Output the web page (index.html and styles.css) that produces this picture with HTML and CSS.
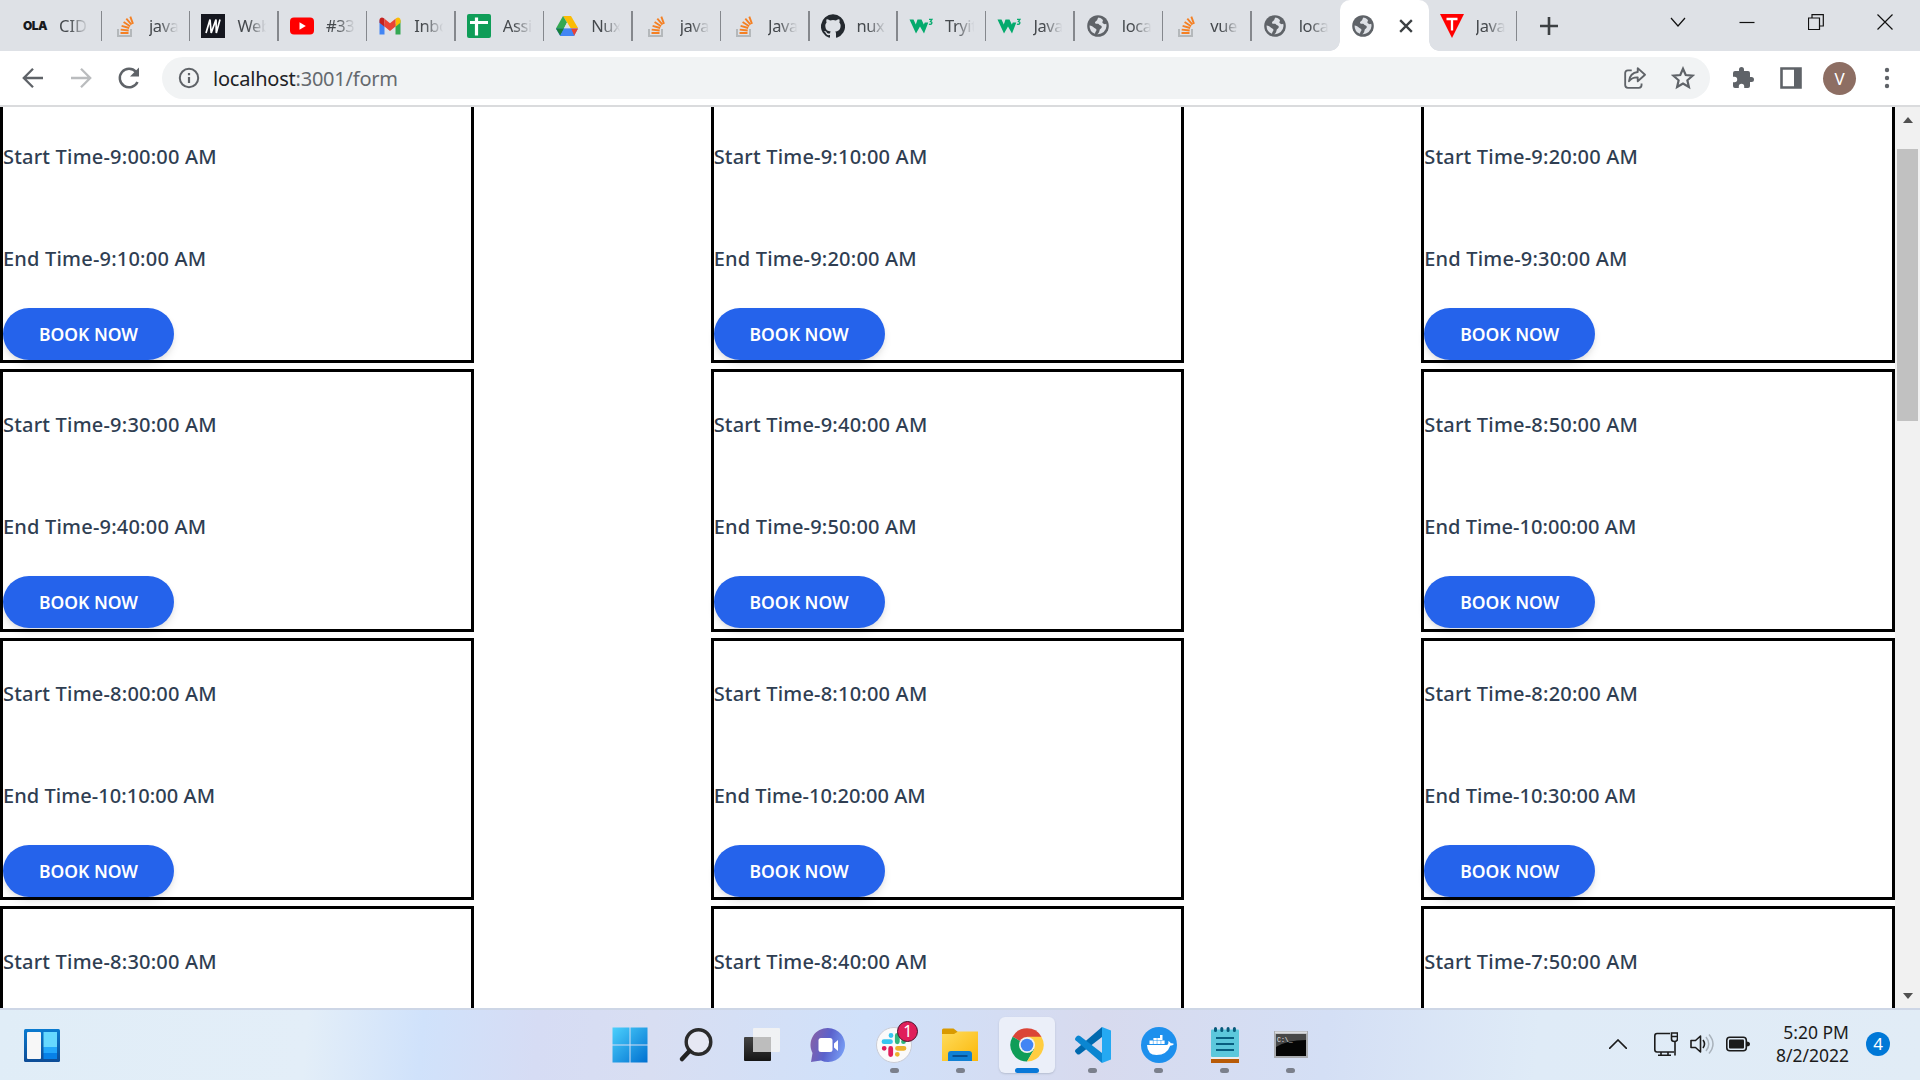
FILE: index.html
```html
<!DOCTYPE html>
<html lang="en">
<head>
<meta charset="utf-8">
<title>localhost:3001/form</title>
<link rel="stylesheet" href="styles.css">
</head>
<body>
<svg class="defs" width="0" height="0">
  <symbol id="so" viewBox="0 0 24 24">
    <path d="M5 15v7h13v-7" fill="none" stroke="#b4b8bb" stroke-width="2"/>
    <path d="M7.5 19h8M7.7 15.6l8 .9M8.6 11.8l7.6 2.2M10.6 8l6.5 4.2M13.3 4.600l5.200 6M17.300 2.600l2.700 7.200" stroke="#f48024" stroke-width="1.900" fill="none"/>
  </symbol>
  <symbol id="globe" viewBox="0 0 24 24">
    <circle cx="12" cy="12" r="10.800" fill="#5f6368"/>
    <path d="M12.500 3.600c-1.600 1.300-.6 2.600-2.300 3.500-1.500.8-1.700 2.300-.2 2.600 1.900.3 2.200-.5 3.300 1 .8 1 2.500.6 2.500 2.200 0 1.400-1.500 1.500-2 2.700-.5 1.300-.5 3.600-2.500 4.600A8.500 8.500 0 0 0 20.500 12c0-.8-.1-1.500-.3-2.200-1.200.6-2.800.4-3.600-.8-.7-1.100.6-1.700.3-3a8.500 8.500 0 0 0-4.400-2.400zM3.600 11.500c2 .3 3.300 1.200 4.500 2.200 1.100.9 2.400.9 2.400 2.400 0 1.200-1.500 1.700-1.500 3.700A8.500 8.500 0 0 1 3.600 11.500z" fill="#dee1e6"/>
  </symbol>
  <symbol id="w3" viewBox="0 0 24 24">
    <path d="M1 6h4l2.300 5L9 6h4l2.300 5 1-2h3.500L15.500 20 11.500 13 7.500 20z" fill="#04aa6d" transform="translate(-.5 -.5)"/>
    <path d="M20 5.300h3l-1.500 2.200c2.200.2 1.800 3.400-1.600 2.700" fill="none" stroke="#04aa6d" stroke-width="1.300"/>
  </symbol>
</svg>

<header class="tabs">
  <div class="tab first"><span class="ola">OLA</span><span class="label">CID</span></div>
  <div class="tab"><svg class="fav"><use href="#so"/></svg><span class="label">java</span></div>
  <div class="tab"><svg class="fav" viewBox="0 0 24 24"><path fill="#15171f" d="M0 0h24v24H0z"/><path d="M5 19L9 5.500l1.200 13.500L15 5.500l.3 13.500L19 5.500" fill="none" stroke="#fff" stroke-width="1.700"/></svg><span class="label">Web</span></div>
  <div class="tab"><svg class="fav" viewBox="0 0 24 24"><rect y="3.500" width="24" height="17" rx="4" fill="#f00"/><path d="M9.500 8.300v7.400l6.300-3.700z" fill="#fff"/></svg><span class="label">#33</span></div>
  <div class="tab"><svg class="fav" viewBox="0 0 24 24"><path d="M1.500 6v14.500h5V10z" fill="#4285f4"/><path d="M22.500 6v14.500h-5V10z" fill="#34a853"/><path d="M1.500 6c0-2 2.300-3.300 4-2l1 .8v8l-5-4z" fill="#c5221f"/><path d="M22.500 6c0-2-2.300-3.300-4-2l-1 .8v8l5-4z" fill="#fbbc04"/><path d="M6.500 4.800l5.500 4.400 5.500-4.400v7.700L12 17l-5.500-4.500z" fill="#ea4335"/></svg><span class="label">Inbo</span></div>
  <div class="tab"><svg class="fav" viewBox="0 0 24 24"><rect width="24" height="24" rx="2" fill="#0f9d58"/><path d="M3 8.500h18M9.500 3.500v18" stroke="#fff" stroke-width="3.200"/></svg><span class="label">Assi</span></div>
  <div class="tab"><svg class="fav" viewBox="0 0 24 24"><path d="M8 2h8l7 12h-7.500z" fill="#fbbc04"/><path d="M8 2l4 6.500L5.200 21.500 1 14.500z" fill="#34a853"/><path d="M5.500 14.500H23l-4 7.500H5.200L1 14.500z" fill="#4285f4"/><path d="M16 14.500h7L19 22z" fill="#ea4335"/><path d="M1 14.500h8L5.200 21.500z" fill="#188038"/><path d="M9 14.500h6.200L12 8.500z" fill="#dee1e6"/><path d="M5.200 21.800l4-7.300h6.500l3.600 7.300z" fill="#4285f4"/></svg><span class="label">Nux</span></div>
  <div class="tab"><svg class="fav"><use href="#so"/></svg><span class="label">java</span></div>
  <div class="tab"><svg class="fav"><use href="#so"/></svg><span class="label">Java</span></div>
  <div class="tab"><svg class="fav" viewBox="0 0 24 24"><path fill="#24292f" d="M12 .3a12 12 0 0 0-3.800 23.400c.6.1.8-.3.8-.6v-2c-3.300.7-4-1.600-4-1.600-.6-1.400-1.400-1.800-1.400-1.800-1-.7.100-.7.100-.7 1.200 0 1.900 1.200 1.900 1.200 1 1.800 2.800 1.300 3.500 1 0-.8.400-1.300.7-1.600-2.700-.3-5.500-1.300-5.500-6 0-1.200.5-2.300 1.300-3.100-.2-.400-.6-1.600 0-3.200 0 0 1-.3 3.400 1.200a11.500 11.500 0 0 1 6 0c2.300-1.500 3.300-1.200 3.300-1.200.6 1.600.2 2.800 0 3.200.9.800 1.300 1.900 1.300 3.200 0 4.600-2.800 5.600-5.500 5.900.5.400.9 1 .9 2.200v3.300c0 .3.100.7.800.6A12 12 0 0 0 12 .3"/></svg><span class="label">nux</span></div>
  <div class="tab"><svg class="fav"><use href="#w3"/></svg><span class="label">Tryit</span></div>
  <div class="tab"><svg class="fav"><use href="#w3"/></svg><span class="label">Java</span></div>
  <div class="tab"><svg class="fav"><use href="#globe"/></svg><span class="label">loca</span></div>
  <div class="tab"><svg class="fav"><use href="#so"/></svg><span class="label">vue</span></div>
  <div class="tab nosep"><svg class="fav"><use href="#globe"/></svg><span class="label">loca</span></div>
  <div class="tab active"><svg class="fav"><use href="#globe"/></svg><svg class="close" viewBox="0 0 12 12"><path d="M1 1l10 10M11 1L1 11" stroke="#3c4043" stroke-width="2"/></svg></div>
  <div class="tab"><svg class="fav" viewBox="0 0 24 24"><path d="M0 0h24L12 24z" fill="#f00"/><path d="M6.500 5h11M12 5v11.500" stroke="#fff" stroke-width="2.300"/></svg><span class="label">Java</span></div>
  <svg class="plus" viewBox="0 0 18 18"><path d="M9 0v18M0 9h18" stroke="#3c4043" stroke-width="2.600"/></svg>
  <div class="window">
    <svg viewBox="0 0 16 16"><path d="M1 4l7 8 7-8" /></svg>
    <svg viewBox="0 0 16 16"><path d="M.5 8.500h15" /></svg>
    <svg viewBox="0 0 16 16"><path d="M.5 4h11v11.500H.5zM4 4V.7h11.300V12H11.500" /></svg>
    <svg viewBox="0 0 16 16"><path d="M.5.5l15 15M15.500.5l-15 15" /></svg>
  </div>
</header>

<nav class="toolbar">
  <svg class="nav" viewBox="0 0 24 24"><path d="M22 12H3M12 2.800L2.800 12l9.200 9.200" fill="none" stroke="#5f6368" stroke-width="2.300"/></svg>
  <svg class="nav" viewBox="0 0 24 24"><path d="M2 12h19M12 2.800l9.200 9.200-9.200 9.200" fill="none" stroke="#babcbe" stroke-width="2.300"/></svg>
  <svg class="nav" viewBox="0 0 24 24"><path d="M20.500 16A9.300 9.300 0 1 1 19 5.800" fill="none" stroke="#5f6368" stroke-width="2.500"/><path d="M22 1.500v9h-9z" fill="#5f6368"/></svg>
  <div class="omnibox">
    <svg class="info" viewBox="0 0 22 22"><circle cx="11" cy="11" r="9.200" fill="none" stroke="#5f6368" stroke-width="2"/><path d="M11 10v6M11 6v2.200" stroke="#5f6368" stroke-width="2.200"/></svg>
    <span class="url"><b>localhost</b>:3001/form</span>
    <svg class="share" viewBox="0 0 22 22"><path d="M8 4H4.500Q2 4 2 6.500v11Q2 20 4.500 20h10q2.500 0 2.500-2.500V16M13.500 2l6.700 6-6.700 6v-3.500c-4-.2-6 1-8 3.500.5-4.500 3-8 8-8.500z" fill="none" stroke="#5f6368" stroke-width="1.700" stroke-linejoin="round"/></svg>
    <svg class="star" viewBox="0 0 22 22"><path d="M11 2.500l2.500 5.800 6.300.6-4.800 4.200 1.400 6.200L11 16l-5.400 3.300L7 13.100 2.200 8.900l6.300-.6z" fill="none" stroke="#5f6368" stroke-width="2"/></svg>
  </div>
  <svg class="ext" viewBox="0 0 24 24"><path d="M20.500 11H19V7a2 2 0 0 0-2-2h-4V3.500a2.500 2.500 0 0 0-5 0V5H4a2 2 0 0 0-2 2v3.800h1.500a2.700 2.700 0 0 1 0 5.400H2V20a2 2 0 0 0 2 2h3.800v-1.500a2.700 2.700 0 0 1 5.400 0V22H17a2 2 0 0 0 2-2v-4h1.500a2.500 2.500 0 0 0 0-5z" fill="#5f6368"/></svg>
  <svg class="side" viewBox="0 0 22 22"><path d="M1.500 1.500h19v19h-19z" fill="none" stroke="#5f6368" stroke-width="2.600"/><path d="M14 1h7v20h-7z" fill="#5f6368"/></svg>
  <span class="avatar">V</span>
  <svg class="dots" viewBox="0 0 6 22"><g fill="#5f6368"><circle cx="3" cy="3" r="2.200"/><circle cx="3" cy="11" r="2.200"/><circle cx="3" cy="19" r="2.200"/></g></svg>
</nav>

<div class="viewport">
  <main class="slots">
    <article class="card"><p>Start Time-9:00:00 AM</p><p>End Time-9:10:00 AM</p><button>BOOK NOW</button></article>
    <article class="card"><p>Start Time-9:10:00 AM</p><p>End Time-9:20:00 AM</p><button>BOOK NOW</button></article>
    <article class="card"><p>Start Time-9:20:00 AM</p><p>End Time-9:30:00 AM</p><button>BOOK NOW</button></article>
    <article class="card"><p>Start Time-9:30:00 AM</p><p>End Time-9:40:00 AM</p><button>BOOK NOW</button></article>
    <article class="card"><p>Start Time-9:40:00 AM</p><p>End Time-9:50:00 AM</p><button>BOOK NOW</button></article>
    <article class="card"><p>Start Time-8:50:00 AM</p><p class="late">End Time-10:00:00 AM</p><button>BOOK NOW</button></article>
    <article class="card"><p>Start Time-8:00:00 AM</p><p class="late">End Time-10:10:00 AM</p><button>BOOK NOW</button></article>
    <article class="card"><p>Start Time-8:10:00 AM</p><p class="late">End Time-10:20:00 AM</p><button>BOOK NOW</button></article>
    <article class="card"><p>Start Time-8:20:00 AM</p><p class="late">End Time-10:30:00 AM</p><button>BOOK NOW</button></article>
    <article class="card"><p>Start Time-8:30:00 AM</p></article>
    <article class="card"><p>Start Time-8:40:00 AM</p></article>
    <article class="card"><p>Start Time-7:50:00 AM</p></article>
  </main>
  <div class="scrollbar"><i class="up"></i><i class="thumb"></i><i class="down"></i></div>
</div>

<footer class="taskbar">
  <svg class="widgets" viewBox="0 0 36 40"><defs><linearGradient id="wb" x2="0" y2="1"><stop stop-color="#0a7bd0"/><stop offset="1" stop-color="#0d4c96"/></linearGradient></defs><rect y="4" width="36" height="33" rx="1.500" fill="url(#wb)"/><rect x="3" y="7" width="14" height="27" rx="1" fill="#f7f7f7"/><path d="M19.500 7H33v15H19.500z" fill="#66d8ff"/><path d="M19.500 22H33v6H19.500z" fill="#22a7fb"/><path d="M19.500 28H33v6H19.500z" fill="#0781e8"/></svg>
  <div class="apps">
    <div class="app"><svg viewBox="0 0 36 36"><defs><linearGradient id="wn" x2="1" y2="1"><stop stop-color="#4cd0fc"/><stop offset="1" stop-color="#0070d0"/></linearGradient></defs><path d="M.5.500h17v17H.500zM18.500.5h17v17h-17zM.5 18.500h17v17H.5zM18.500 18.500h17v17h-17z" fill="url(#wn)"/></svg></div>
    <div class="app"><svg viewBox="0 0 36 36"><circle cx="20.500" cy="15" r="12.300" fill="#e6e8f3" stroke="#2b2b2b" stroke-width="3.400"/><path d="M11.500 24L4 32" stroke="#222" stroke-width="4.500" stroke-linecap="round"/></svg></div>
    <div class="app"><svg viewBox="0 0 36 36"><defs><linearGradient id="tv" x2="0" y2="1"><stop stop-color="#444"/><stop offset="1" stop-color="#151515"/></linearGradient></defs><rect x="0" y="10" width="27" height="24" rx="1" fill="url(#tv)"/><rect x="9" y="1" width="27" height="24" rx="1" fill="#f4f4f4" opacity=".88"/><path d="M9 10h18v15H9z" fill="#bdbdbd"/></svg></div>
    <div class="app"><svg viewBox="0 0 36 36"><defs><linearGradient id="ch" x1="0" y1=".3" x2="1" y2=".6"><stop stop-color="#8560a8"/><stop offset=".5" stop-color="#5a62cc"/><stop offset="1" stop-color="#779cf4"/></linearGradient></defs><path d="M18 1a17 17 0 1 1-7 32.500L1 35l1.500-9A17 17 0 0 1 18 1z" fill="url(#ch)"/><rect x="8.500" y="11" width="14" height="14" rx="2.500" fill="#fff"/><path d="M24 16.500l4-3.500v11l-4-3.500z" fill="#fff"/></svg></div>
    <div class="app run"><svg viewBox="0 0 36 36"><circle cx="18" cy="18" r="17.500" fill="#fafafa" stroke="#c9ccd6"/><g stroke-width="4.800" stroke-linecap="round"><path d="M8 14.700h6.500M15 8.500v0" stroke="#36c5f0"/><path d="M21.300 8.500v6.300M27.500 14.700v0" stroke="#2eb67d"/><path d="M21.500 21.300H28M21.300 27.300v0" stroke="#ecb22e"/><path d="M14.700 21.500v6M8.200 21.300v0" stroke="#e01e5a"/></g></svg><em>1</em></div>
    <div class="app run"><svg viewBox="0 0 36 36"><defs><linearGradient id="fo" x2="1" y2="1"><stop stop-color="#ffdc5c"/><stop offset="1" stop-color="#fbb709"/></linearGradient></defs><path d="M0 8V3q0-1.500 1.500-1.500h10L16 5v4z" fill="#d99a00"/><path d="M0 7h12l4-2.500h20V34H0z" fill="url(#fo)"/><path d="M6 34V27q0-3 3-3h18q3 0 3 3v7z" fill="#1080d4"/><path d="M10.500 29h15" stroke="#064f92" stroke-width="2"/></svg></div>
    <div class="app run current"><svg viewBox="0 0 36 36"><path d="M18 18L3.600 9.700A16.600 16.600 0 0 1 32.400 9.700z" fill="#db4437"/><path d="M18 18L3.600 9.700A16.600 16.600 0 0 0 18 34.600l7.200-12.400z" fill="#0f9d58"/><path d="M18 9.700h14.400A16.600 16.600 0 0 1 18 34.600l7.200-12.400z" fill="#ffcd40"/><circle cx="18" cy="18" r="8" fill="#f1f1f1"/><circle cx="18" cy="18" r="6.300" fill="#4285f4"/></svg></div>
    <div class="app run"><svg viewBox="0 0 36 36"><path d="M27 0v10L5 27q-1.500 1-3 0l-1.500-1.700q-1-1.300 0-2.600z" fill="#0069ae"/><path d="M27 36V26L5 9Q3.500 8 2 9L.500 10.700q-1 1.300 0 2.600z" fill="#0b86d1"/><path d="M27 0l9 3.500v29L27 36z" fill="#25a9f2"/></svg></div>
    <div class="app run"><svg viewBox="0 0 36 36"><circle cx="18" cy="18" r="18" fill="#1d90ed"/><path d="M6 18h20q1.800-.5 1.300-4 2 .7 2.500 2.300 2-.3 3.200.7-1.200 1.800-3.800 1.800Q26 28 15.500 28 6.500 28 6 18z" fill="#fff"/><path d="M8.500 13.500h3.400V17H8.500zM12.400 13.500h3.400V17h-3.400zM16.300 13.500h3.400V17h-3.400zM20.200 13.500h3.400V17h-3.400zM12.400 11h3.400v2h-3.400zM16.300 11h3.400v2h-3.400zM19 8h2.500v5H19z" fill="#fff"/></svg></div>
    <div class="app run"><svg viewBox="0 0 36 36"><path d="M4 32h28v4H4z" fill="#b85b08"/><path d="M4 29h28v3H4z" fill="#eee"/><rect x="4" y="2.500" width="28" height="27.500" rx="1" fill="#5cc8dc"/><path d="M9 11h18M9 17h18M9 23h18" stroke="#075e80" stroke-width="1.800"/><path d="M8.500 1.500v2M14.800 1.500v2M21.100 1.500v2M27.400 1.500v2" stroke="#07597a" stroke-width="3" stroke-linecap="round"/></svg></div>
    <div class="app run"><svg viewBox="0 0 36 36"><path d="M1 4h34v27H1z" fill="#a9abaf"/><path d="M2 4.500h32v2H2z" fill="#dcdde0"/><path d="M3 7h30v22H3z" fill="#050505"/><path d="M3 7h30v6Q14 13 3 20z" fill="#484848"/><text x="4" y="14.500" class="prompt">C:\_</text></svg></div>
  </div>
  <div class="tray">
    <svg class="chev" viewBox="0 0 18 10"><path d="M0 10L9 1l9 9" fill="none" stroke="#1b1b1b" stroke-width="1.600"/></svg>
    <svg class="net" viewBox="0 0 24 24"><path d="M16 1.500H3Q.8 1.500.8 4v13.500Q.8 20 3 20h17M7 20v3.500M14 20v3.500M4 23.200h13M21 10v13.500M17.500 1h6v6q0 2.500-3 2.500t-3-2.500zM17.500 4.500h6" fill="none" stroke="#1b1b1b" stroke-width="1.600"/></svg>
    <svg class="vol" viewBox="0 0 24 22"><path d="M1 7.500h4.500L10.500 3v16l-5-4.500H1z" fill="none" stroke="#1b1b1b" stroke-width="1.600" stroke-linejoin="round"/><path d="M13 7q3 4 0 8" fill="none" stroke="#1b1b1b" stroke-width="1.600"/><path d="M16 4q5.500 7 0 14M19 1.500q8 9.500 0 19" fill="none" stroke="#a9b2bb" stroke-width="1.500"/></svg>
    <svg class="bat" viewBox="0 0 24 16"><rect x=".8" y="1.300" width="19.500" height="13.400" rx="3" fill="none" stroke="#1b1b1b" stroke-width="1.600"/><rect x="3" y="3.500" width="15" height="9" rx="1" fill="#1b1b1b"/><path d="M20.500 5.500q3.500 0 3.500 2.500t-3.500 2.500z" fill="#1b1b1b"/></svg>
    <div class="clock"><span>5:20 PM</span><span>8/2/2022</span></div>
    <span class="count">4</span>
  </div>
</footer>
</body>
</html>
```
FILE: styles.css
```css
* { box-sizing: border-box; }
body { margin: 0; width: 1920px; height: 1080px; overflow: hidden; display: flex; flex-direction: column; background: #fff; font-family: "Noto Sans", "Open Sans", sans-serif; }
svg { display: block; flex: none; }
.defs { position: absolute; }

.tabs { height: 51px; flex: none; display: flex; background: #dee1e6; }
.tab { position: relative; width: 88.450px; height: 51px; flex: none; display: flex; align-items: center; padding-left: 11px; }
.tab::after { content: ""; position: absolute; right: 0; top: 11px; width: 1.500px; height: 30px; background: #85888d; }
.tab.first { width: 102px; padding-left: 23px; }
.tab.nosep::after { display: none; }
.fav { width: 24px; height: 24px; }
.ola { width: 24px; font: 900 12px Inter, sans-serif; letter-spacing: -.6px; color: #17191c; }
.label { width: 30px; margin-left: 12px; overflow: hidden; white-space: nowrap; font-size: 16.500px; letter-spacing: -.4px; color: #45494d; -webkit-mask-image: linear-gradient(90deg, #000 35%, transparent 98%); mask-image: linear-gradient(90deg, #000 35%, transparent 98%); }
.first .label { letter-spacing: 0; }
.tab.active { background: #fff; border-radius: 10px 10px 0 0; }
.tab.active::before, .tab.active::after { content: ""; position: absolute; top: auto; bottom: 0; width: 10px; height: 10px; }
.tab.active::before { left: -10px; background: radial-gradient(circle at 0 0, transparent 9.500px, #fff 10px); }
.tab.active::after { right: -10px; background: radial-gradient(circle at 100% 0, transparent 9.500px, #fff 10px); }
.close { width: 14px; height: 14px; margin-left: 24px; }
.plus { width: 18px; height: 18px; margin: 17px 0 0 23px; }
.window { margin-left: auto; display: flex; gap: 53px; padding: 14px 27px 0 0; }
.window svg { width: 16px; height: 16px; fill: none; stroke: #111; stroke-width: 1.200; }

.toolbar { height: 56px; flex: none; display: flex; align-items: center; border-bottom: 2px solid #dadbdd; padding-left: 21px; }
.nav { width: 24px; height: 24px; margin-right: 24px; }
.omnibox { width: 1548px; height: 42px; margin: 0 0 0 -3px; border-radius: 21px; background: #f1f3f4; display: flex; align-items: center; padding: 0 15px 0 16px; }
.info { width: 22px; height: 22px; }
.url { margin-left: 13px; font-size: 20px; letter-spacing: -.22px; color: #65696e; }
.url b { font-weight: 400; color: #202124; }
.share { width: 24px; height: 24px; margin-left: auto; }
.star { width: 24px; height: 24px; margin-left: 24px; }
.ext { width: 24px; height: 24px; margin-left: 21px; }
.side { width: 22px; height: 22px; margin-left: 25px; }
.avatar { width: 33px; height: 33px; margin-left: 21px; border-radius: 50%; background: #8d6e63; color: #fff; font-size: 17px; display: grid; place-items: center; }
.dots { width: 6px; height: 22px; margin-left: 28px; }

.viewport { height: 901px; flex: none; overflow: hidden; display: flex; }
.slots { width: 1895px; flex: none; display: grid; grid-template-columns: repeat(3, 25%); grid-auto-rows: 262.500px; justify-content: space-between; align-content: start; row-gap: 6px; margin-top: -6.500px; }
.card { border: 3px solid #000; color: #2f3e52; font-weight: 500; font-size: 20px; }
.card p { margin: 0 0 72px; height: 30px; line-height: 30px; white-space: nowrap; letter-spacing: .2px; }
.card p:first-child { margin-top: 38px; }
.card p + p { margin-bottom: 34px; }
.card .late { letter-spacing: .06px; }
.card button { display: block; width: 171px; height: 52px; border: 0; border-radius: 26px; background: #2563eb; color: #fff; font: 600 17.500px "Noto Sans", sans-serif; letter-spacing: 0; padding: 0; box-shadow: 0 5px 8px -1px rgba(0,0,0,.1), 0 2px 5px -1px rgba(0,0,0,.06); }
.scrollbar { width: 25px; background: #f1f1f1; display: flex; flex-direction: column; align-items: center; padding: 10px 0 9px; }
.up, .down { border: 5.500px solid transparent; }
.up { border-top: 0; border-bottom: 6px solid #505050; }
.down { border-bottom: 0; border-top: 6px solid #505050; margin-top: auto; }
.thumb { width: 21px; height: 272px; margin-top: 26px; background: #c1c1c1; }

.taskbar { height: 72px; flex: none; display: flex; align-items: center; background: linear-gradient(95deg, #e0edf7 0, #e3eef8 16%, #d0e2fb 22%, #d6dcf4 28%, #d8def2 34%, #d0e1fa 45%, #d7daee 57%, #d4dff5 69%, #dfebf7 80%, #e1ecf6); border-top: 2px solid #cdd6e6; }
.widgets { width: 36px; height: 40px; margin-left: 24px; }
.apps { display: flex; gap: 10.100px; margin-left: 542px; }
.app { position: relative; width: 56px; height: 56px; display: flex; justify-content: center; padding-top: 10px; border-radius: 6px; }
.app svg { width: 36px; height: 36px; }
.app.run::after { content: ""; position: absolute; bottom: 0; width: 9px; height: 5px; border-radius: 3px; background: #7b808c; }
.app.current { background: #ebeff9; box-shadow: 0 1px 2px #b5bdd0; }
.app.current::after { width: 24px; background: #0878d8; }
.app em { position: absolute; left: 31px; top: 4px; width: 21px; height: 21px; border-radius: 50%; border: 1.500px solid #4d1028; background: #e01e5a; color: #fff; font: 16px/18px "Noto Sans", sans-serif; text-align: center; }
.prompt { font: 6.500px "Liberation Mono", monospace; fill: #eee; }
.tray { display: flex; align-items: center; margin-left: auto; padding: 0 30px 2px 0; }
.chev { width: 18px; height: 10px; margin-right: 27px; }
.net { width: 24px; height: 24px; margin-right: 12px; }
.vol { width: 24px; height: 22px; margin-right: 12px; }
.bat { width: 24px; height: 16px; }
.clock { width: 99px; display: flex; flex-direction: column; align-items: flex-end; font-size: 17.500px; line-height: 23px; color: #1b1b1b; }
.count { width: 24px; height: 24px; margin-left: 17px; border-radius: 50%; background: #0078d7; color: #fff; font-size: 17px; line-height: 24px; text-align: center; }
```
